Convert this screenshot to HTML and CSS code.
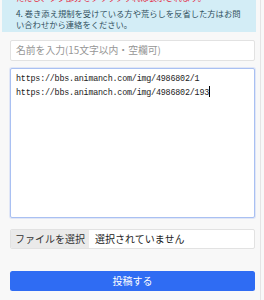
FILE: index.html
```html
<!DOCTYPE html>
<html lang="ja">
  <head>
    <meta charset="UTF-8" />
    <meta name="viewport" content="width=device-width, initial-scale=1.0" />
    <title>投稿フォーム</title>
    <link rel="stylesheet" href="styles.css">
  </head>
  <body>
    <div class="page">
      <div class="alert">
        <ul class="rules">
          <li class="warn">ただし、タグ部分をクリックすれば表示されます。</li>
          <li>4. 巻き添え規制を受けている方や荒らしを反省した方はお問い合わせから連絡をください。</li>
        </ul>
      </div>

      <form class="post-form">
        <input class="name" type="text" placeholder="名前を入力(15文字以内・空欄可)">
        <div class="body-text">
          <div>https://bbs.animanch.com/img/4986802/1</div>
          <div>https://bbs.animanch.com/img/4986802/193<span class="caret"></span></div>
        </div>
        <div class="file">
          <span class="file-btn">ファイルを選択</span>
          <span class="file-name">選択されていません</span>
        </div>
        <button class="submit" type="button">投稿する</button>
      </form>
    </div>
  </body>
</html>
```

FILE: styles.css
```css
body {
  margin: 0;
  background: #f8f8f8;
  font-family: "Noto Sans CJK JP", "Noto Sans", sans-serif;
  color: #333;
}

.page {
  width: 258px;
  height: 300px;
  padding-left: 2px;
  border-right: 1px solid #e4e4e4;
  overflow: hidden;
}

.alert {
  margin: -8.5px 4px 0 0;
  padding: 0 12px 2px 14px;
  background: #d3edf6;
  color: #31505e;
  font-size: 8.3px;
  line-height: 11px;
}

.rules {
  list-style: none;
  margin: 0;
  padding: 0;
}

.rules li + li {
  margin-top: 5px;
}

.rules .warn {
  color: #e5223a;
}

.post-form {
  display: flex;
  flex-direction: column;
  padding: 8px 5px 0 8px;
}

.name {
  height: 21px;
  box-sizing: border-box;
  margin: 0;
  padding: 0 5px;
  border: 1px solid #e2e2e2;
  border-radius: 2px;
  background: #fff;
  font-family: inherit;
  font-size: 9.8px;
  outline: none;
}

.name::placeholder {
  color: #969696;
}

.body-text {
  height: 150px;
  box-sizing: border-box;
  margin-top: 7px;
  padding: 3px 5px;
  border: 1px solid #a9c0f2;
  border-radius: 2px;
  background: #fff;
  box-shadow: 0 0 0 1px rgba(60, 110, 240, 0.12);
  font-family: "Liberation Mono", monospace;
  font-size: 8.4px;
  letter-spacing: -0.2px;
  line-height: 14px;
  color: #222;
}

.caret {
  display: inline-block;
  width: 0;
  height: 11px;
  border-left: 1px solid #000;
  vertical-align: -2px;
}

.file {
  display: flex;
  height: 20px;
  box-sizing: border-box;
  margin-top: 11px;
  border: 1px solid #e2e2e2;
  border-radius: 2px;
  background: #fff;
  font-size: 10px;
  line-height: 18px;
  overflow: hidden;
}

.file-btn {
  width: 78px;
  background: #eaeaea;
  color: #333;
  text-align: center;
}

.file-name {
  padding-left: 6px;
  color: #222;
}

.submit {
  height: 20px;
  margin-top: 22px;
  padding: 0;
  border: none;
  border-radius: 2.5px;
  background: #2f6cf3;
  color: #fff;
  font-family: inherit;
  font-size: 10px;
  cursor: pointer;
}
```
